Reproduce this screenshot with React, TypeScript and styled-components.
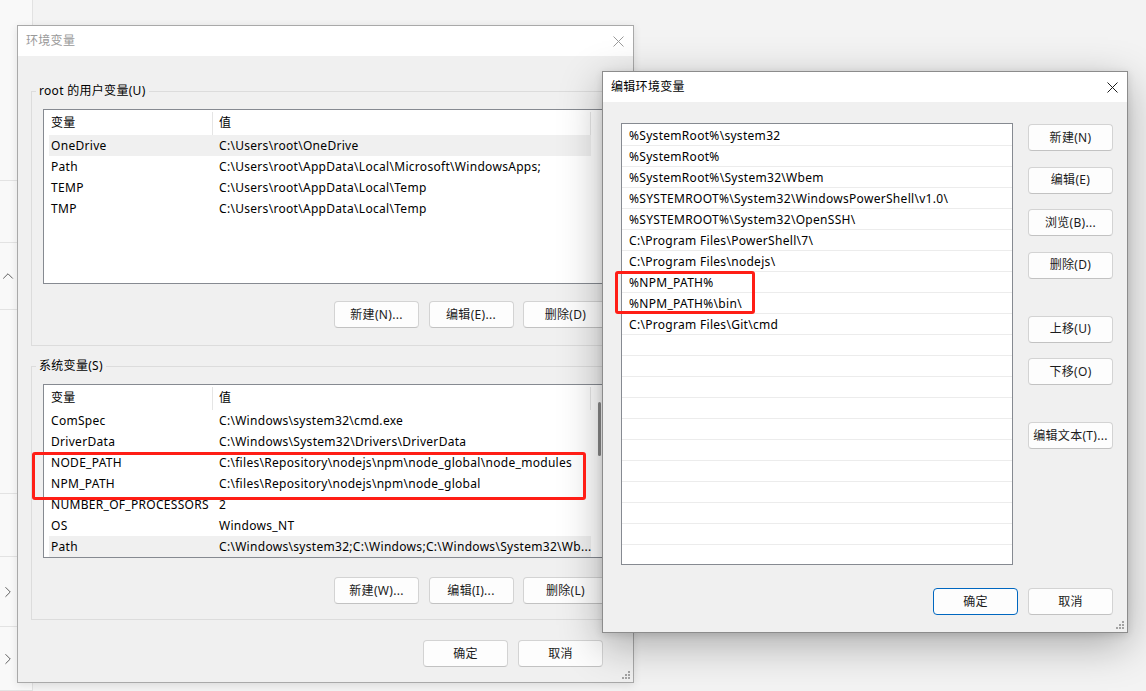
import { FC, ReactNode } from "react"
import styled, { createGlobalStyle, css } from "styled-components"
import { ChevronRight, ChevronUp } from "lucide-react"

const GlobalStyle = createGlobalStyle`
  html, body {
    margin: 0;
    padding: 0;
  }
  body {
    width: 1146px;
    height: 691px;
    overflow: hidden;
    font-family: "Noto Sans", "Noto Sans CJK SC", sans-serif;
    font-size: 12px;
    letter-spacing: 0.3px;
    color: #000;
  }
  * {
    box-sizing: border-box;
  }
`

const Desktop = styled.div`
  position: relative;
  width: 1146px;
  height: 691px;
  overflow: hidden;
  display: flex;
  background: #f3f3f3;
`
const SidePane = styled.div`
  width: 33px;
  flex-shrink: 0;
  display: flex;
  flex-direction: column;
  background: #f9f9f9;
  border-right: 1px solid #e2e2e2;
`
const SideCard = styled.div<{ $h?: number }>`
  ${({ $h }) => css`
    height: ${$h ? `${$h}px` : "auto"};
    flex: ${$h ? "0 0 auto" : "1"};
    display: flex;
    align-items: center;
    margin-left: -1px;
    border-bottom: 1px solid #e3e3e3;
    color: #5c5c5c;
  `}
`

const Window = styled.div<{ $x: number; $y: number; $w: number; $h: number; $active?: boolean }>`
  ${({ $x, $y, $w, $h, $active }) => css`
    position: absolute;
    left: ${$x}px;
    top: ${$y}px;
    width: ${$w}px;
    height: ${$h}px;
    display: flex;
    flex-direction: column;
    background: #f0f0f0;
    border: 1px solid ${$active ? "#8c8c8c" : "#a9a9a9"};
    box-shadow: ${$active
      ? "0 12px 40px rgba(0, 0, 0, 0.3), 0 2px 8px rgba(0, 0, 0, 0.12)"
      : "0 2px 8px rgba(0, 0, 0, 0.1)"};
  `}
`
const TitleBar = styled.div<{ $active?: boolean }>`
  height: 30px;
  flex-shrink: 0;
  display: flex;
  align-items: center;
  justify-content: space-between;
  padding: 0 9px 0 8px;
  background: #fff;
  color: ${({ $active }) => ($active ? "#000" : "#999")};
  span {
    line-height: 16px;
  }
`
const Grip = styled.svg`
  position: absolute;
  right: 3px;
  bottom: 3px;
`

const EnvBody = styled.div`
  flex: 1;
  display: flex;
  flex-direction: column;
  padding: 0 13px;
`
const Group = styled.fieldset<{ $top: number }>`
  margin: ${({ $top }) => $top}px 0 0 0;
  padding: 0;
  min-width: 0;
  border: 1px solid #dcdcdc;
  legend {
    margin-left: 4px;
    padding: 0 3px;
    line-height: 16px;
  }
`
const GroupBody = styled.div<{ $pt: number; $pb: number }>`
  padding: ${({ $pt, $pb }) => `${$pt}px 11px ${$pb}px 11px`};
`
const ButtonRow = styled.div<{ $top: number; $gap: number; $pr?: number }>`
  ${({ $top, $gap, $pr }) => css`
    display: flex;
    justify-content: flex-end;
    gap: ${$gap}px;
    margin-top: ${$top}px;
    padding-right: ${$pr ?? 0}px;
  `}
`
const Button = styled.div<{ $primary?: boolean }>`
  ${({ $primary }) => css`
    width: 85px;
    height: 27px;
    flex-shrink: 0;
    display: flex;
    align-items: center;
    justify-content: center;
    background: #fdfdfd;
    border: 1px solid ${$primary ? "#0067c0" : "#d3d3d3"};
    border-bottom-color: ${$primary ? "#0067c0" : "#c2c2c2"};
    border-radius: 4px;
    color: #1b1b1b;
    line-height: 16px;
    white-space: nowrap;
  `}
`

const ListBox = styled.div<{ $h: number }>`
  height: ${({ $h }) => $h}px;
  display: flex;
  background: #fff;
  border: 1px solid #868a91;
  overflow: hidden;
`
const ListMain = styled.div`
  flex: 1;
  min-width: 0;
  display: flex;
  flex-direction: column;
`
const ListHeader = styled.div`
  height: 25px;
  flex-shrink: 0;
  display: flex;
  align-items: center;
  padding-top: 2px;
`
const HeaderCell = styled.div<{ $w?: number }>`
  ${({ $w }) => css`
    width: ${$w ? `${$w}px` : "auto"};
    flex: ${$w ? "0 0 auto" : "1"};
    height: 23px;
    line-height: 21px;
    padding-left: ${$w ? 7 : 6}px;
    border-right: 1px solid #e5e5e5;
  `}
`
const VarRow = styled.div<{ $selected?: boolean }>`
  height: 21px;
  flex-shrink: 0;
  display: flex;
  margin-left: 5px;
  line-height: 21px;
  white-space: nowrap;
  background: ${({ $selected }) => ($selected ? "#f0f0f0" : "transparent")};
`
const NameCell = styled.div`
  width: 163px;
  flex-shrink: 0;
  padding-left: 2px;
  overflow: hidden;
`
const ValueCell = styled.div`
  flex: 1;
  min-width: 0;
  padding-left: 7px;
  overflow: hidden;
`
const ScrollGutter = styled.div`
  width: 16px;
  flex-shrink: 0;
  padding: 17px 0 0 7px;
`
const ScrollThumb = styled.div`
  width: 3px;
  height: 54px;
  border-radius: 2px;
  background: #8a8a8a;
`

const EditBody = styled.div`
  flex: 1;
  display: flex;
  flex-direction: column;
  padding: 21px 14px 0 18px;
`
const EditMain = styled.div`
  display: flex;
  gap: 15px;
`
const PathList = styled.div`
  width: 392px;
  height: 442px;
  padding-top: 1px;
  background: #fff;
  border: 1px solid #868a91;
  overflow: hidden;
`
const PathRow = styled.div`
  height: 21px;
  padding-left: 7px;
  line-height: 22px;
  border-bottom: 1px solid #ececec;
  white-space: nowrap;
`
const SideButtons = styled.div`
  display: flex;
  flex-direction: column;
  padding-top: 1px;
`
const ButtonStack = styled.div<{ $top?: number }>`
  display: flex;
  flex-direction: column;
  gap: 15.5px;
  margin-top: ${({ $top }) => $top ?? 0}px;
`

const Annotation = styled.div<{ $x: number; $y: number; $w: number; $h: number }>`
  ${({ $x, $y, $w, $h }) => css`
    position: absolute;
    left: ${$x}px;
    top: ${$y}px;
    width: ${$w}px;
    height: ${$h}px;
    border: 3px solid #ff1e16;
    border-radius: 3px;
    pointer-events: none;
  `}
`

const CloseIcon: FC<{ color: string }> = ({ color }) => (
  <svg width="11" height="11" viewBox="0 0 11 11">
    <path d="M0.5 0.5 L10.5 10.5 M10.5 0.5 L0.5 10.5" stroke={color} strokeWidth="1" />
  </svg>
)

const ResizeGrip: FC = () => (
  <Grip width="9" height="9" viewBox="0 0 9 9">
    {[[7, 1], [4, 4], [7, 4], [1, 7], [4, 7], [7, 7]].map(([x, y]) => (
      <rect key={`${x}-${y}`} x={x} y={y} width="2" height="2" fill="#a3a3a3" />
    ))}
  </Grip>
)

type Variable = { name: string; value: string; selected?: boolean }

const userVars: Variable[] = [
  { name: "OneDrive", value: "C:\\Users\\root\\OneDrive", selected: true },
  { name: "Path", value: "C:\\Users\\root\\AppData\\Local\\Microsoft\\WindowsApps;" },
  { name: "TEMP", value: "C:\\Users\\root\\AppData\\Local\\Temp" },
  { name: "TMP", value: "C:\\Users\\root\\AppData\\Local\\Temp" },
]

const systemVars: Variable[] = [
  { name: "ComSpec", value: "C:\\Windows\\system32\\cmd.exe" },
  { name: "DriverData", value: "C:\\Windows\\System32\\Drivers\\DriverData" },
  { name: "NODE_PATH", value: "C:\\files\\Repository\\nodejs\\npm\\node_global\\node_modules" },
  { name: "NPM_PATH", value: "C:\\files\\Repository\\nodejs\\npm\\node_global" },
  { name: "NUMBER_OF_PROCESSORS", value: "2" },
  { name: "OS", value: "Windows_NT" },
  {
    name: "Path",
    value: "C:\\Windows\\system32;C:\\Windows;C:\\Windows\\System32\\Wb...",
    selected: true,
  },
]

const pathEntries = [
  "%SystemRoot%\\system32",
  "%SystemRoot%",
  "%SystemRoot%\\System32\\Wbem",
  "%SYSTEMROOT%\\System32\\WindowsPowerShell\\v1.0\\",
  "%SYSTEMROOT%\\System32\\OpenSSH\\",
  "C:\\Program Files\\PowerShell\\7\\",
  "C:\\Program Files\\nodejs\\",
  "%NPM_PATH%",
  "%NPM_PATH%\\bin\\",
  "C:\\Program Files\\Git\\cmd",
]

const VariableList: FC<{ rows: Variable[]; height: number; scrollbar?: boolean }> = ({
  rows,
  height,
  scrollbar,
}) => (
  <ListBox $h={height}>
    <ListMain>
      <ListHeader>
        <HeaderCell $w={169}>变量</HeaderCell>
        <HeaderCell>值</HeaderCell>
      </ListHeader>
      {rows.map((row) => (
        <VarRow key={row.name} $selected={row.selected}>
          <NameCell>{row.name}</NameCell>
          <ValueCell>{row.value}</ValueCell>
        </VarRow>
      ))}
    </ListMain>
    <ScrollGutter>{scrollbar && <ScrollThumb />}</ScrollGutter>
  </ListBox>
)

const VariableGroup: FC<{
  title: string
  top: number
  pt: number
  pb: number
  buttonsTop: number
  children: ReactNode
  buttons: string[]
}> = ({ title, top, pt, pb, buttonsTop, children, buttons }) => (
  <Group $top={top}>
    <legend>{title}</legend>
    <GroupBody $pt={pt} $pb={pb}>
      {children}
      <ButtonRow $top={buttonsTop} $gap={9.5}>
        {buttons.map((b) => (
          <Button key={b}>{b}</Button>
        ))}
      </ButtonRow>
    </GroupBody>
  </Group>
)

const EnvironmentDialog: FC = () => (
  <Window $x={17} $y={25} $w={617} $h={658}>
    <TitleBar>
      <span>环境变量</span>
      <CloseIcon color="#9a9a9a" />
    </TitleBar>
    <EnvBody>
      <VariableGroup
        title="root 的用户变量(U)"
        top={27}
        pt={10}
        pb={17}
        buttonsTop={17}
        buttons={["新建(N)...", "编辑(E)...", "删除(D)"]}
      >
        <VariableList rows={userVars} height={175} />
      </VariableGroup>
      <VariableGroup
        title="系统变量(S)"
        top={12}
        pt={10}
        pb={15}
        buttonsTop={19}
        buttons={["新建(W)...", "编辑(I)...", "删除(L)"]}
      >
        <VariableList rows={systemVars} height={174} scrollbar />
      </VariableGroup>
      <ButtonRow $top={20} $gap={10} $pr={17}>
        <Button>确定</Button>
        <Button>取消</Button>
      </ButtonRow>
    </EnvBody>
    <ResizeGrip />
  </Window>
)

const EditPathDialog: FC = () => {
  const rows = [...pathEntries, ...Array(11).fill("")]
  return (
    <Window $x={602} $y={71} $w={526} $h={562} $active>
      <TitleBar $active>
        <span>编辑环境变量</span>
        <CloseIcon color="#1c1c1c" />
      </TitleBar>
      <EditBody>
        <EditMain>
          <PathList>
            {rows.map((entry, i) => (
              <PathRow key={i}>{entry}</PathRow>
            ))}
          </PathList>
          <SideButtons>
            <ButtonStack>
              <Button>新建(N)</Button>
              <Button>编辑(E)</Button>
              <Button>浏览(B)...</Button>
              <Button>删除(D)</Button>
            </ButtonStack>
            <ButtonStack $top={37}>
              <Button>上移(U)</Button>
              <Button>下移(O)</Button>
            </ButtonStack>
            <ButtonStack $top={37}>
              <Button>编辑文本(T)...</Button>
            </ButtonStack>
          </SideButtons>
        </EditMain>
        <ButtonRow $top={23} $gap={10}>
          <Button $primary>确定</Button>
          <Button>取消</Button>
        </ButtonRow>
      </EditBody>
      <ResizeGrip />
    </Window>
  )
}

const App: FC = () => (
  <>
    <GlobalStyle />
    <Desktop>
      <SidePane>
        <SideCard $h={181} />
        <SideCard $h={62} />
        <SideCard $h={67}>
          <ChevronUp size={18} strokeWidth={1.3} />
        </SideCard>
        <SideCard $h={184} />
        <SideCard $h={63} />
        <SideCard $h={70}>
          <ChevronRight size={18} strokeWidth={1.3} />
        </SideCard>
        <SideCard>
          <ChevronRight size={18} strokeWidth={1.3} />
        </SideCard>
      </SidePane>
      <EnvironmentDialog />
      <EditPathDialog />
      <Annotation $x={32} $y={452} $w={554} $h={48} />
      <Annotation $x={615} $y={271} $w={140} $h={43} />
    </Desktop>
  </>
)

export default App
